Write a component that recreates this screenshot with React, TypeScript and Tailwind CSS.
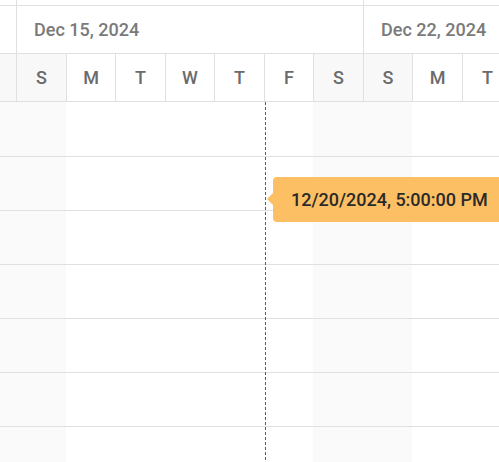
import React from "react";

const widths = [16, 50, 49, 50, 49, 50, 49, 50, 49, 50, 50];
const letters = ["", "S", "M", "T", "W", "T", "F", "S", "S", "M", "T"];
const weekend = [true, true, false, false, false, false, false, true, true, false, false];

export default function App() {
  const font = { fontFamily: "Roboto, 'Noto Sans', sans-serif" };
  return (
    <div className="relative w-[499px] h-[462px] overflow-hidden bg-white" style={font}>
      {/* top strip */}
      <div className="flex h-[6px] border-b border-[#e0e0e0]">
        <div className="w-[16px] shrink-0" />
        <div className="w-[347px] shrink-0 border-l border-[#e0e0e0]" />
        <div className="flex-1 border-l border-[#e0e0e0]" />
      </div>
      {/* week row */}
      <div className="flex h-[48px] border-b border-[#e0e0e0] text-[18px] font-medium text-[#7a7a7a]">
        <div className="w-[16px] shrink-0" />
        <div className="w-[347px] shrink-0 border-l border-[#e0e0e0] flex items-center pl-[17px]">
          Dec 15, 2024
        </div>
        <div className="flex-1 border-l border-[#e0e0e0] flex items-center pl-[17px] whitespace-nowrap">
          Dec 22, 2024
        </div>
      </div>
      {/* day row */}
      <div className="flex h-[48px] border-b border-[#e0e0e0] text-[18px] font-medium text-[#6b6b6b]">
        {widths.map((w, i) => (
          <div
            key={i}
            className={`shrink-0 flex items-center justify-center ${i > 0 ? "border-l border-[#e0e0e0]" : ""} ${weekend[i] ? "bg-[#f8f8f8]" : "bg-white"}`}
            style={{ width: w }}
          >
            {letters[i]}
          </div>
        ))}
      </div>
      {/* body */}
      <div className="relative">
        <div className="absolute inset-0 flex">
          <div className="w-[66px] shrink-0 bg-[#fafafa]" />
          <div className="w-[247px] shrink-0" />
          <div className="w-[99px] shrink-0 bg-[#fafafa]" />
        </div>
        <div className="relative flex flex-col">
          <div className="h-[55px] border-b border-[#e0e0e0]" />
          <div className="h-[54px] border-b border-[#e0e0e0]" />
          <div className="h-[54px] border-b border-[#e0e0e0]" />
          <div className="h-[54px] border-b border-[#e0e0e0]" />
          <div className="h-[54px] border-b border-[#e0e0e0]" />
          <div className="h-[54px] border-b border-[#e0e0e0]" />
          <div className="h-[54px]" />
        </div>
      </div>
      {/* current time line */}
      <svg className="absolute left-[265px] top-[102px]" width="1" height="360">
        <line x1="0.5" y1="0" x2="0.5" y2="360" stroke="#d81b60" strokeWidth="1" strokeDasharray="3 2" />
      </svg>
      {/* tooltip */}
      <div className="absolute left-[273px] top-[177px] h-[45px] w-[236px] rounded-[4px] bg-[#fdbf63] flex items-center pl-[18px] text-[18px] font-medium text-[#2a2a2a] whitespace-nowrap">
        <div className="absolute left-[-6px] top-[16px] w-0 h-0 border-y-[6px] border-y-transparent border-r-[6px] border-r-[#fdbf63]" />
        12/20/2024, 5:00:00 PM
      </div>
    </div>
  );
}
